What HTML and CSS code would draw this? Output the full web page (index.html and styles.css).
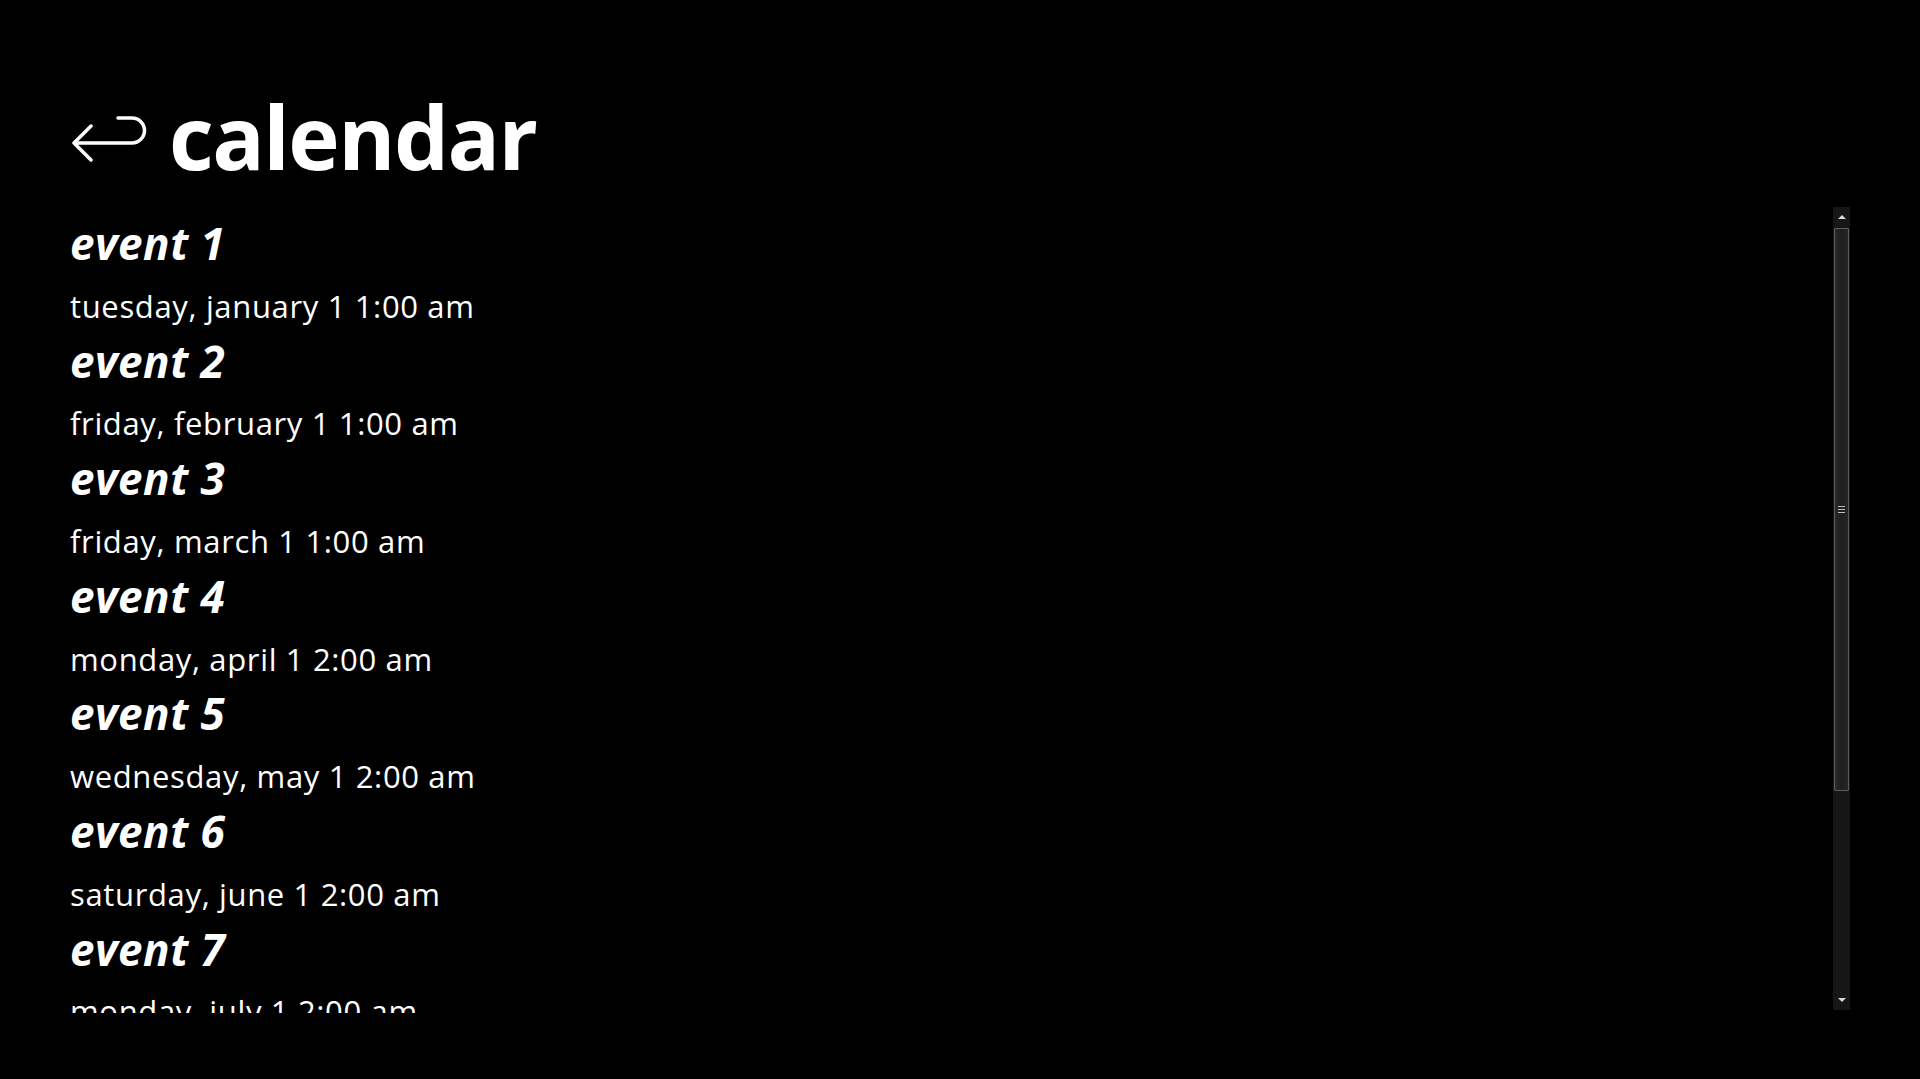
FILE: index.html
```html
<!DOCTYPE html>
<html lang="en">
<head>
<meta charset="utf-8">
<title>calendar</title>
<link rel="stylesheet" href="styles.css">
</head>
<body>
<div class="page">
  <header class="header">
    <svg class="back" width="80" height="50" viewBox="70 112 80 50" aria-hidden="true">
      <path d="M91 126 L74 143 L91 160 M74 143 H132 A12.5 12.5 0 0 0 132 118 H118" fill="none" stroke="#fff" stroke-width="3.5" stroke-linecap="round" stroke-linejoin="round"/>
    </svg>
    <h1 class="title">calendar</h1>
  </header>
  <main class="main">
    <ul class="list">
      <li class="event"><div class="event-name">event 1</div><div class="event-date">tuesday, january 1 1:00 am</div></li>
      <li class="event"><div class="event-name">event 2</div><div class="event-date">friday, february 1 1:00 am</div></li>
      <li class="event"><div class="event-name">event 3</div><div class="event-date">friday, march 1 1:00 am</div></li>
      <li class="event"><div class="event-name">event 4</div><div class="event-date">monday, april 1 2:00 am</div></li>
      <li class="event"><div class="event-name">event 5</div><div class="event-date">wednesday, may 1 2:00 am</div></li>
      <li class="event"><div class="event-name">event 6</div><div class="event-date">saturday, june 1 2:00 am</div></li>
      <li class="event"><div class="event-name">event 7</div><div class="event-date">monday, july 1 2:00 am</div></li>
      <li class="event"><div class="event-name">event 8</div><div class="event-date">thursday, august 1 2:00 am</div></li>
    </ul>
    <div class="scrollbar">
      <div class="sb-btn sb-up"></div>
      <div class="sb-track">
        <div class="sb-thumb"><span class="grip"></span><span class="grip"></span><span class="grip"></span></div>
      </div>
      <div class="sb-btn sb-down"></div>
    </div>
  </main>
</div>
</body>
</html>
```

FILE: styles.css
```css
html, body {
  margin: 0;
  padding: 0;
  background: #000;
  color: #fff;
  height: 100%;
  overflow: hidden;
}
body {
  font-family: "Open Sans", "Noto Sans", sans-serif;
}
.page {
  padding: 0 70px 0 70px;
}
.header {
  display: flex;
  align-items: flex-start;
  height: 207px;
  box-sizing: border-box;
  padding-top: 76px;
}
.back {
  display: block;
  margin-left: 0;
  margin-top: 36px;
}
.title {
  margin: 0 0 0 19px;
  font-size: 87px;
  font-weight: 700;
  line-height: 120px;
  letter-spacing: -1.5px;
}
.main {
  display: flex;
  align-items: flex-start;
}
.list {
  flex: 1;
  list-style: none;
  margin: 7px 0 0 0;
  padding: 0;
  height: 799px;
  overflow: hidden;
}
.event {
  height: 117.6px;
}
.event-name {
  font-size: 44px;
  font-weight: 700;
  font-style: italic;
  line-height: 58.8px;
  letter-spacing: 0.5px;
}
.event-date {
  font-size: 31px;
  font-weight: 400;
  line-height: 58.8px;
  padding-top: 4px;
  letter-spacing: 0.65px;
}
.scrollbar {
  width: 17px;
  height: 803px;
  background: #161616;
  display: flex;
  flex-direction: column;
}
.sb-btn {
  height: 20px;
  display: flex;
  justify-content: center;
  align-items: center;
}
.sb-btn::after {
  content: "";
  width: 0;
  height: 0;
  border-left: 4px solid transparent;
  border-right: 4px solid transparent;
}
.sb-up::after {
  border-bottom: 4px solid #d8d8d8;
}
.sb-down::after {
  border-top: 4px solid #d8d8d8;
}
.sb-track {
  flex: 1;
  padding: 1px 1px;
}
.sb-thumb {
  height: 563px;
  box-sizing: border-box;
  border: 1px solid #5c5c5c;
  border-radius: 1px;
  background: linear-gradient(to right, #2a2a2a, #1e1e1e 50%, #262626);
  display: flex;
  flex-direction: column;
  justify-content: center;
  align-items: center;
  gap: 2px;
}
.grip {
  display: block;
  width: 7px;
  height: 1px;
  background: #bdbdbd;
}
```
